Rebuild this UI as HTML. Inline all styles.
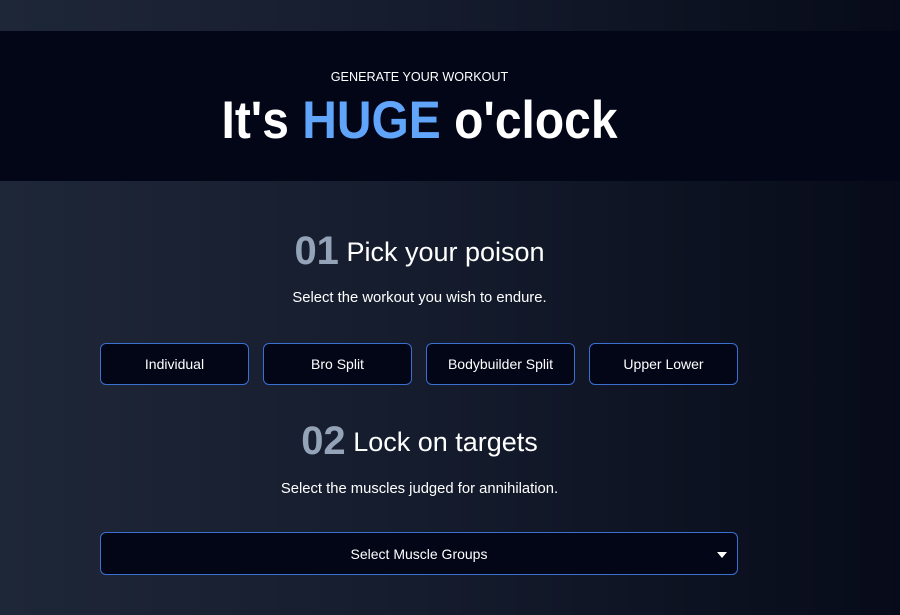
<!DOCTYPE html>
<html><head><style>
*{margin:0;padding:0;box-sizing:border-box}
body{width:900px;height:615px;overflow:hidden;font-family:"Liberation Sans",sans-serif;color:#fff;background:linear-gradient(90deg,#1e2738 0%,#141b2c 50%,#070b19 100%);position:relative}
.hdr{position:absolute;left:0;top:31px;width:900px;height:150px;background:#020617}
.sub{position:absolute;top:69px;left:0;width:839px;text-align:center;font-size:13px;font-weight:500;transform:scaleX(0.97)}
.title{position:absolute;top:90px;left:0;width:839px;text-align:center;font-size:53px;font-weight:bold;transform:scaleX(0.905)}
.title span{color:#60a5fa}
.h2{position:absolute;left:0;width:839px;text-align:center;font-size:27px}
.h2 b{font-size:40px;color:#94a3b8;font-weight:bold;vertical-align:-3px}
.p{position:absolute;left:0;width:839px;text-align:center;font-size:14.8px}
.btn{position:absolute;top:343px;width:149px;height:42px;border:1px solid #3b6fd0;border-radius:6px;background:#020617;font-size:14px;display:flex;align-items:center;justify-content:center}
.sel{position:absolute;left:100px;top:532px;width:638px;height:43px;border:1px solid #3b6fd0;border-radius:6px;background:#020617;font-size:14px;display:flex;align-items:center;justify-content:center}
.tri{position:absolute;right:10px;top:19px;width:0;height:0;border-left:5px solid transparent;border-right:5px solid transparent;border-top:6px solid #fff}
</style></head><body>
<div class="hdr"></div>
<div class="sub">GENERATE YOUR WORKOUT</div>
<div class="title">It's <span>HUGE</span> o'clock</div>
<div class="h2" style="top:229px"><b>01</b> Pick your poison</div>
<div class="p" style="top:290px">Select the workout you wish to endure.</div>
<div class="btn" style="left:100px">Individual</div>
<div class="btn" style="left:263px">Bro Split</div>
<div class="btn" style="left:426px">Bodybuilder Split</div>
<div class="btn" style="left:589px">Upper Lower</div>
<div class="h2" style="top:419px"><b>02</b> Lock on targets</div>
<div class="p" style="top:481px">Select the muscles judged for annihilation.</div>
<div class="sel">Select Muscle Groups<div class="tri"></div></div>
</body></html>
